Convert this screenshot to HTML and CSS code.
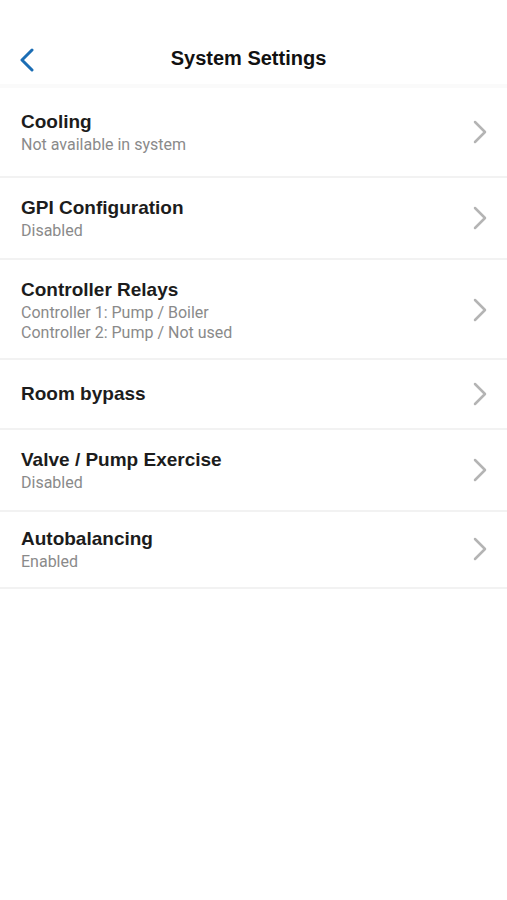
FILE: index.html
```html
<!DOCTYPE html>
<html lang="en">
<head>
    <meta charset="UTF-8">
    <meta name="viewport" content="width=device-width, initial-scale=1.0">
    <title>System Settings</title>
    <link rel="stylesheet" href="styles.css">
</head>
<body>
    <div class="screen">
        <div class="header">
            <a class="back" href="#">
                <svg width="16" height="24" viewBox="0 0 16 24">
                    <polyline points="13,2 3,12 13,22" fill="none" stroke="#1b6db4" stroke-width="3" stroke-linecap="round" stroke-linejoin="round"/>
                </svg>
            </a>
            <h1>System Settings</h1>
        </div>
        <ul class="settings-list">
            <li class="setting first">
                <div class="setting-text">
                    <div class="setting-title">Cooling</div>
                    <div class="setting-sub">Not available in system</div>
                </div>
                <span class="chevron"><svg width="14" height="26" viewBox="0 0 14 26"><polyline points="2,3 12,13 2,23" fill="none" stroke="#b4b4b4" stroke-width="2.5" stroke-linecap="round" stroke-linejoin="round"/></svg></span>
            </li>
            <li class="setting">
                <div class="setting-text">
                    <div class="setting-title">GPI Configuration</div>
                    <div class="setting-sub">Disabled</div>
                </div>
                <span class="chevron"><svg width="14" height="26" viewBox="0 0 14 26"><polyline points="2,3 12,13 2,23" fill="none" stroke="#b4b4b4" stroke-width="2.5" stroke-linecap="round" stroke-linejoin="round"/></svg></span>
            </li>
            <li class="setting multi">
                <div class="setting-text">
                    <div class="setting-title">Controller Relays</div>
                    <div class="setting-sub">Controller 1: Pump / Boiler</div>
                    <div class="setting-sub">Controller 2: Pump / Not used</div>
                </div>
                <span class="chevron"><svg width="14" height="26" viewBox="0 0 14 26"><polyline points="2,3 12,13 2,23" fill="none" stroke="#b4b4b4" stroke-width="2.5" stroke-linecap="round" stroke-linejoin="round"/></svg></span>
            </li>
            <li class="setting single">
                <div class="setting-text">
                    <div class="setting-title">Room bypass</div>
                </div>
                <span class="chevron"><svg width="14" height="26" viewBox="0 0 14 26"><polyline points="2,3 12,13 2,23" fill="none" stroke="#b4b4b4" stroke-width="2.5" stroke-linecap="round" stroke-linejoin="round"/></svg></span>
            </li>
            <li class="setting">
                <div class="setting-text">
                    <div class="setting-title">Valve / Pump Exercise</div>
                    <div class="setting-sub">Disabled</div>
                </div>
                <span class="chevron"><svg width="14" height="26" viewBox="0 0 14 26"><polyline points="2,3 12,13 2,23" fill="none" stroke="#b4b4b4" stroke-width="2.5" stroke-linecap="round" stroke-linejoin="round"/></svg></span>
            </li>
            <li class="setting last">
                <div class="setting-text">
                    <div class="setting-title">Autobalancing</div>
                    <div class="setting-sub">Enabled</div>
                </div>
                <span class="chevron"><svg width="14" height="26" viewBox="0 0 14 26"><polyline points="2,3 12,13 2,23" fill="none" stroke="#b4b4b4" stroke-width="2.5" stroke-linecap="round" stroke-linejoin="round"/></svg></span>
            </li>
        </ul>
    </div>
</body>
</html>
```

FILE: styles.css
```css
body {
    margin: 0;
    background: #fff;
    font-family: "Liberation Sans", Arial, sans-serif;
}
.screen {
    width: 507px;
}
.header {
    height: 84px;
    border-bottom: 4px solid #fafafa;
    display: flex;
    align-items: flex-end;
    position: relative;
}
.header h1 {
    margin: 0 0 12px 0;
    padding-right: 10px;
    width: 100%;
    text-align: center;
    font-size: 20px;
    line-height: 28px;
    font-weight: bold;
    color: #111;
}
.back {
    position: absolute;
    left: 19px;
    top: 48px;
    display: block;
    width: 16px;
    height: 24px;
}
.back svg {
    display: block;
}
.settings-list {
    list-style: none;
    margin: 0;
    padding: 0;
}
.setting {
    display: flex;
    align-items: center;
    padding: 17px 20px 17px 21px;
    border-bottom: 2px solid #f2f2f2;
}
.setting.first {
    padding-top: 21px;
    padding-bottom: 21px;
}
.setting.multi {
    padding-bottom: 15px;
}
.setting.single {
    min-height: 34px;
}
.setting.last {
    padding-top: 14px;
    padding-bottom: 15px;
}
.setting-text {
    flex: 1;
}
.setting-title {
    font-size: 19px;
    line-height: 26px;
    font-weight: bold;
    color: #1c1c1c;
}
.setting-sub {
    font-family: Roboto, "Liberation Sans", sans-serif;
    font-size: 16px;
    line-height: 20px;
    color: #8a8a8a;
}
.chevron svg {
    display: block;
}
```
